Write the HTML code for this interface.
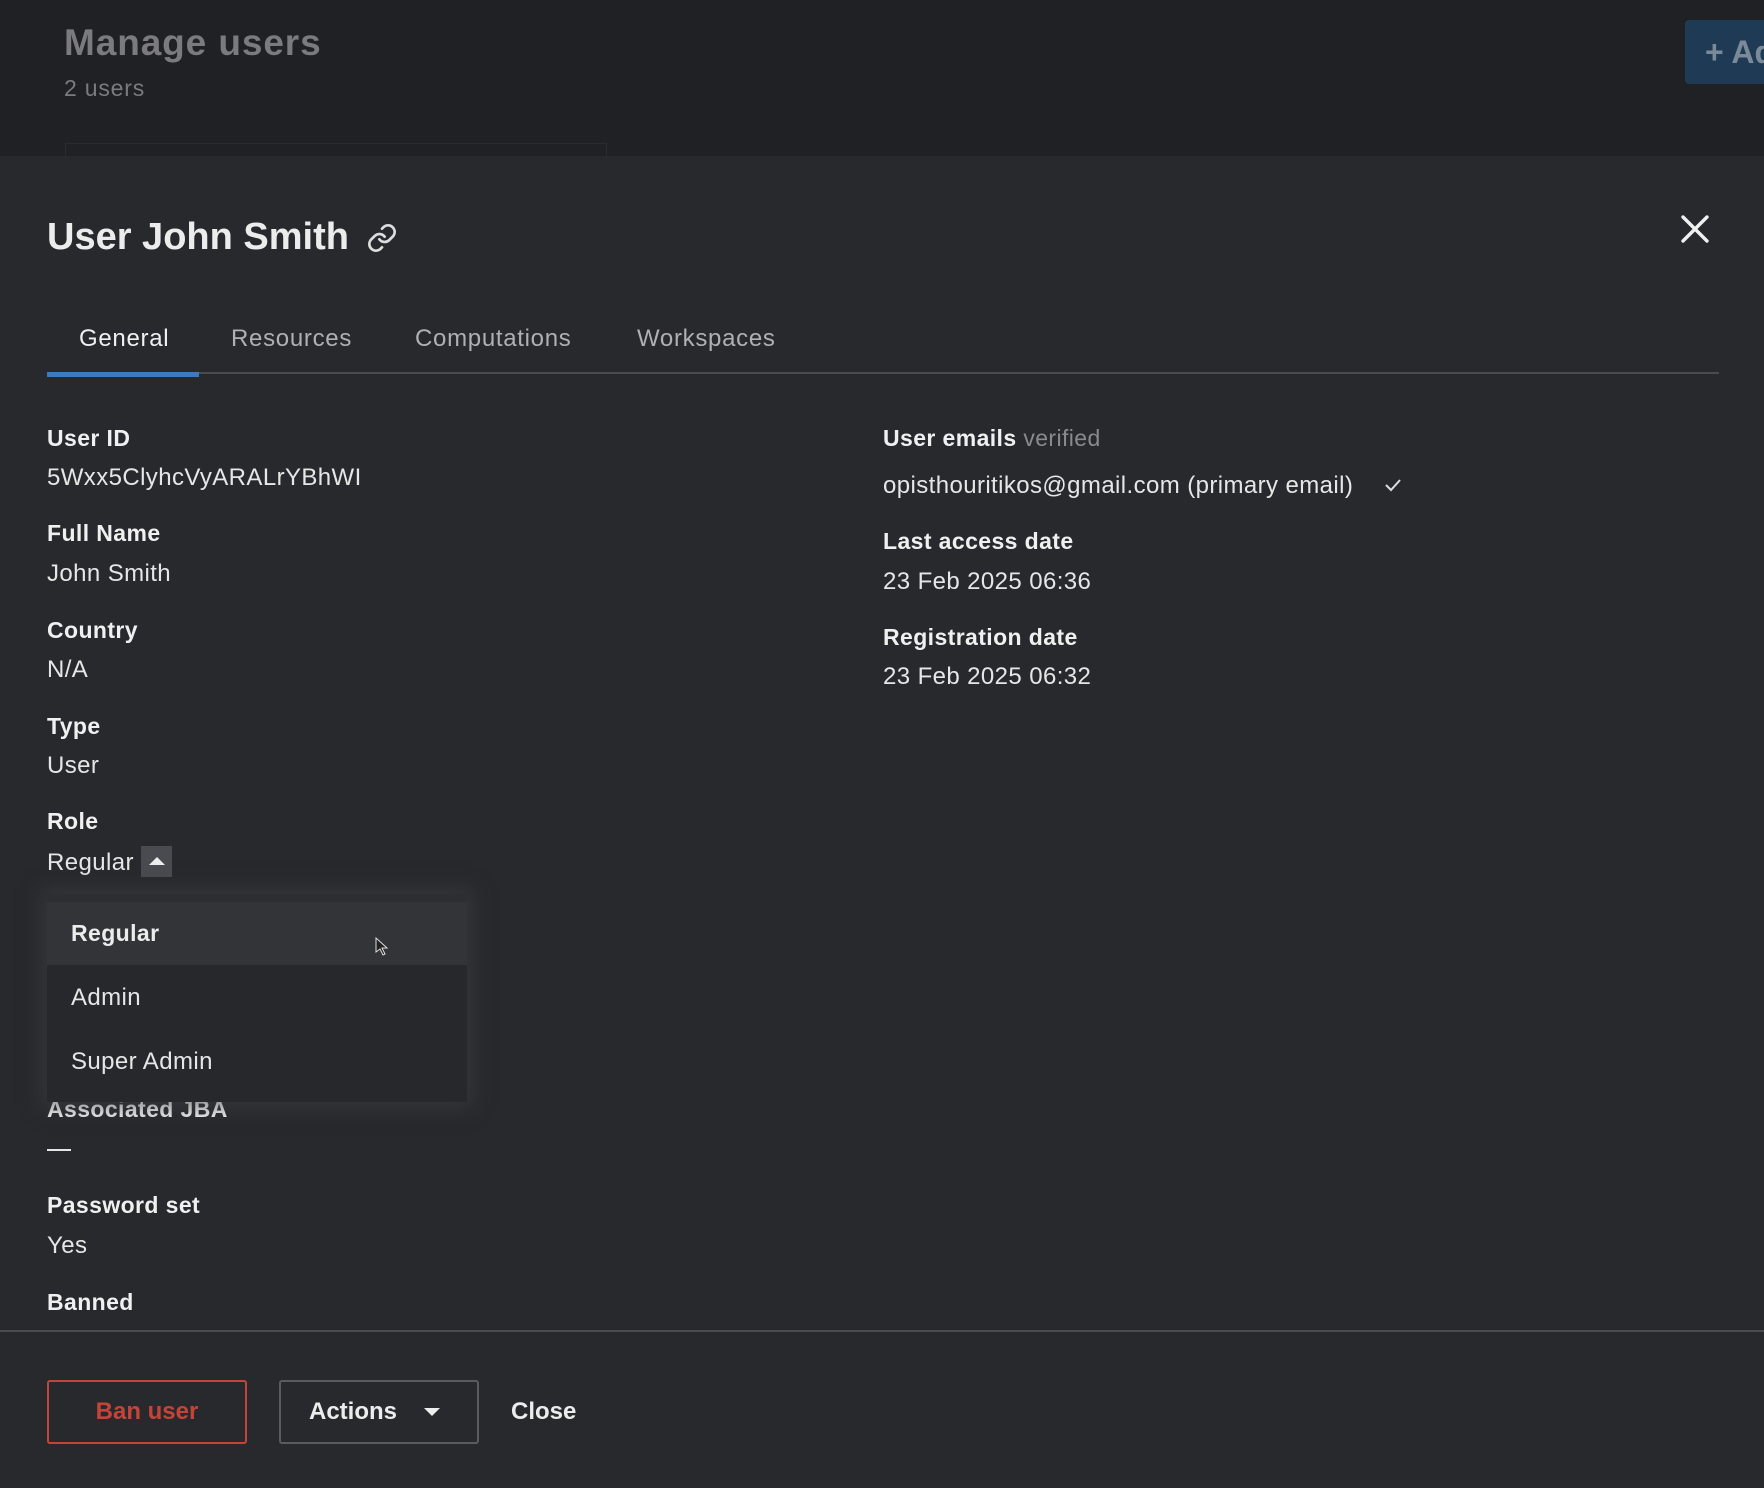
<!DOCTYPE html>
<html><head><meta charset="utf-8"><style>
*{margin:0;padding:0;box-sizing:border-box}
body{width:1764px;height:1488px;background:#28292d;font-family:"Liberation Sans",sans-serif;position:relative;overflow:hidden;color:#e6e6e6}
.a{position:absolute;white-space:nowrap;line-height:1}
.lab{font-weight:bold;font-size:23px;color:#f0f0f0;letter-spacing:0.4px}
.val{font-size:24px;color:#e6e6e6;letter-spacing:0.4px}
.tab{font-size:24px;color:#b0b0b3;letter-spacing:0.7px}
</style></head><body>
<div class="a" style="left:0;top:0;width:1764px;height:156px;background:#202124"></div>
<div class="a" style="left:65px;top:143px;width:542px;height:14px;border:1px solid #2a2b2e;border-bottom:none"></div>
<div class="a" style="left:64px;top:24px;font-size:37px;font-weight:bold;color:#7b7b7d;letter-spacing:0.9px">Manage users</div>
<div class="a" style="left:64px;top:77px;font-size:23px;color:#7b7b7d;letter-spacing:0.8px">2 users</div>
<div class="a" style="left:1685px;top:20px;width:90px;height:64px;background:#1f3a55;border-radius:4px"></div>
<div class="a" style="left:1705px;top:36px;font-size:32px;font-weight:bold;color:#7b8a99">+ Ad</div>

<div class="a" style="left:47px;top:218px;font-size:38px;font-weight:bold;color:#ececec">User John Smith</div>
<svg class="a" style="left:366px;top:222px" width="32" height="32" viewBox="0 0 24 24" fill="none" stroke="#ddd" stroke-width="2" stroke-linecap="round"><path d="M10 13a5 5 0 0 0 7.5.5l3-3a5 5 0 0 0-7-7l-1.5 1.5"/><path d="M14 11a5 5 0 0 0-7.5-.5l-3 3a5 5 0 0 0 7 7l1.5-1.5"/></svg>
<svg class="a" style="left:1680px;top:214px" width="30" height="30" viewBox="0 0 30 30" stroke="#f0f0f0" stroke-width="3.4" stroke-linecap="round"><path d="M3 3L27 27M27 3L3 27"/></svg>

<div class="a tab" style="left:79px;top:327px;color:#f0f0f0">General</div>
<div class="a tab" style="left:231px;top:327px">Resources</div>
<div class="a tab" style="left:415px;top:327px">Computations</div>
<div class="a tab" style="left:637px;top:327px">Workspaces</div>
<div class="a" style="left:47px;top:372px;width:1672px;height:2px;background:#4a4b4f"></div>
<div class="a" style="left:47px;top:372px;width:152px;height:5px;background:#3d7bc0"></div>

<div class="a lab" style="left:47px;top:427px">User ID</div>
<div class="a val" style="left:47px;top:466px">5Wxx5ClyhcVyARALrYBhWI</div>
<div class="a lab" style="left:47px;top:522px">Full Name</div>
<div class="a val" style="left:47px;top:562px">John Smith</div>
<div class="a lab" style="left:47px;top:619px">Country</div>
<div class="a val" style="left:47px;top:658px">N/A</div>
<div class="a lab" style="left:47px;top:715px">Type</div>
<div class="a val" style="left:47px;top:754px">User</div>
<div class="a lab" style="left:47px;top:810px">Role</div>
<div class="a val" style="left:47px;top:851px">Regular</div>
<div class="a" style="left:141px;top:846px;width:31px;height:31px;background:#4a4b50"></div>
<div class="a" style="left:149px;top:857px;width:0;height:0;border-left:8px solid transparent;border-right:8px solid transparent;border-bottom:8px solid #eee"></div>

<div class="a lab" style="left:47px;top:1098px">Associated JBA</div>
<div class="a" style="left:47px;top:1149px;width:24px;height:2px;background:#e6e6e6"></div>
<div class="a lab" style="left:47px;top:1194px">Password set</div>
<div class="a val" style="left:47px;top:1234px">Yes</div>
<div class="a lab" style="left:47px;top:1291px">Banned</div>

<div class="a" style="left:47px;top:894px;width:420px;height:208px;background:#27282c;box-shadow:0 0 18px 6px rgba(60,61,65,.6)"></div>
<div class="a" style="left:47px;top:894px;width:420px;height:8px;background:#2d2e31"></div>
<div class="a" style="left:47px;top:902px;width:420px;height:63px;background:#333437"></div>
<div class="a" style="left:71px;top:922px;font-size:23px;font-weight:bold;color:#ececec;letter-spacing:0.4px">Regular</div>
<div class="a val" style="left:71px;top:986px">Admin</div>
<div class="a val" style="left:71px;top:1050px">Super Admin</div>
<svg class="a" style="left:375px;top:937px" width="14" height="20" viewBox="0 0 14 20"><path d="M1 1v14l4-3 3 6 2-1-3-6h5z" fill="#222" stroke="#ddd" stroke-width="1"/></svg>

<div class="a" style="left:883px;top:427px;font-size:23px;font-weight:bold;color:#f0f0f0;letter-spacing:0.4px">User emails <span style="font-weight:normal;color:#8a8a8d">verified</span></div>
<div class="a val" style="left:883px;top:474px">opisthouritikos@gmail.com (primary email)</div>
<svg class="a" style="left:1384px;top:477px" width="18" height="16" viewBox="0 0 18 16" fill="none" stroke="#ddd" stroke-width="2"><path d="M2 8l5 5 9-10"/></svg>
<div class="a lab" style="left:883px;top:530px">Last access date</div>
<div class="a val" style="left:883px;top:570px">23 Feb 2025 06:36</div>
<div class="a lab" style="left:883px;top:626px">Registration date</div>
<div class="a val" style="left:883px;top:665px">23 Feb 2025 06:32</div>

<div class="a" style="left:0;top:1330px;width:1764px;height:2px;background:#4a4b4f"></div>
<div class="a" style="left:47px;top:1380px;width:200px;height:64px;border:2px solid #c5443a;border-radius:3px"></div>
<div class="a" style="left:47px;top:1400px;width:200px;text-align:center;font-size:24px;font-weight:bold;color:#c5443a">Ban user</div>
<div class="a" style="left:279px;top:1380px;width:200px;height:64px;border:2px solid #5a5b5f;border-radius:3px"></div>
<div class="a" style="left:309px;top:1400px;font-size:24px;font-weight:bold;color:#ececec">Actions</div>
<div class="a" style="left:424px;top:1408px;width:0;height:0;border-left:8px solid transparent;border-right:8px solid transparent;border-top:8px solid #eee"></div>
<div class="a" style="left:511px;top:1400px;font-size:24px;font-weight:bold;color:#ececec">Close</div>
</body></html>
